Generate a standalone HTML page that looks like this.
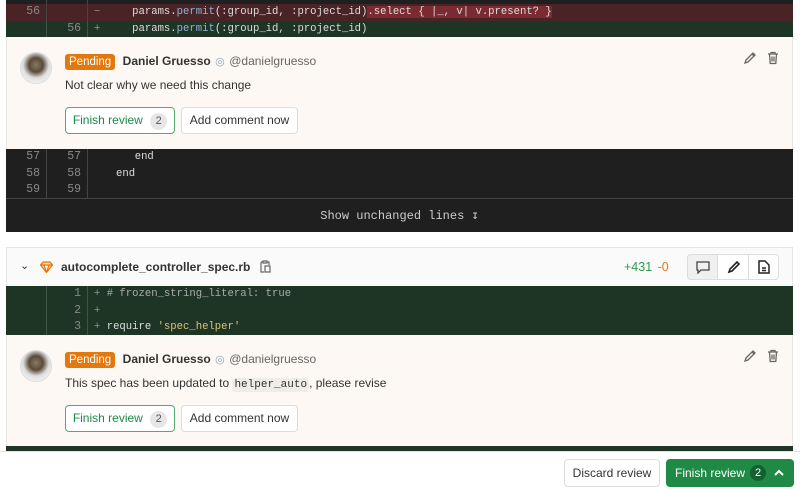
<!DOCTYPE html>
<html><head><meta charset="utf-8"><style>
*{box-sizing:border-box;margin:0;padding:0}
body{width:800px;height:490px;overflow:hidden;background:#fff;font-family:"Liberation Sans",sans-serif;position:relative;color:#333}
.a{position:absolute}
.mono{font-family:"Liberation Mono",monospace;font-size:10.6px}
.row{position:absolute;left:6px;width:787px;height:16.5px;line-height:16.5px}
.n1,.n2{position:absolute;top:0;height:100%;text-align:right;color:#888;border-right:1px solid #444;font-size:11.5px}
.n1{left:0;width:41px;padding-right:6px}
.n2{left:41px;width:41px;padding-right:6px}
.code{position:absolute;left:82px;top:0;color:#ddd;white-space:pre}
.dark{background:#1f1f1f}
.red{background:#4a2327}
.grn{background:#1e3525}
.grn .n1,.grn .n2{border-color:#3d5545}
.cmt{background:#fdf8f3;border-left:1px solid #e5e5e5;border-right:1px solid #e5e5e5}
.av{width:32px;height:32px;border-radius:50%;background:radial-gradient(circle at 50% 40%,#8a7a60 0,#5a4a3a 30%,#ddd 55%,#f4f4f4 80%);border:1px solid #ddd}
.pend{display:inline-block;background:#e3780f;color:#fff;font-size:11.5px;padding:2px 4px;border-radius:3px}
.name{font-weight:bold;font-size:12px;color:#333}
.user{font-size:12px;color:#666}
.txt{font-size:12px;color:#333}
.btn{position:absolute;height:27px;border:1px solid #ddd;border-radius:4px;background:#fff;font-size:12px;line-height:25px;color:#333;text-align:center}
.btng{border-color:#54ab72;color:#1a8a45}
.badge{display:inline-block;background:#e6e6e6;color:#555;border-radius:9px;font-size:11px;width:17px;height:17px;line-height:17px;text-align:center;margin-left:4px}
</style></head><body>

<div class="row dark mono" style="top:0;height:4px"><div class="n1"></div><div class="n2"></div></div>
<div class="row red mono" style="top:4px"><div class="n1">56</div><div class="n2"></div><div class="code" style="left:88px"><span style="color:#aa8888">−</span>     params.<span style="color:#8fb3d9">permit</span>(:group_id, :project_id)<span style="background:#7a2a30">.select { |_, v| v.present? }</span></div></div>
<div class="row grn mono" style="top:20.5px"><div class="n1"></div><div class="n2">56</div><div class="code" style="left:88px"><span style="color:#889988">+</span>     params.<span style="color:#8fb3d9">permit</span>(:group_id, :project_id)</div></div>

<div class="a cmt" style="left:6px;top:37px;width:787px;height:112px"></div>
<div class="a av" style="left:20px;top:52px"></div>
<div class="a" style="left:65px;top:52px;white-space:nowrap"><span class="pend">Pending</span> <span class="name" style="margin-left:3px">Daniel Gruesso</span> <span style="color:#8aa3c0;font-size:11px">◎</span> <span class="user">@danielgruesso</span></div>
<div class="a txt" style="left:65px;top:78px">Not clear why we need this change</div>
<div class="btn btng" style="left:65px;top:107px;width:110px">Finish review <span class="badge">2</span></div>
<div class="btn" style="left:181px;top:107px;width:117px">Add comment now</div>
<svg class="a" style="left:743px;top:51px" width="14" height="14" viewBox="0 0 14 14"><path d="M2 12l1-3 7-7 2 2-7 7z M9 3l2 2" fill="none" stroke="#666" stroke-width="1.3"/></svg>
<svg class="a" style="left:766px;top:51px" width="14" height="14" viewBox="0 0 14 14"><path d="M2 3h10M5 3V1.5h4V3M3.5 3l.7 9.5h5.6l.7-9.5M6 5.5v5M8 5.5v5" fill="none" stroke="#666" stroke-width="1.3"/></svg>

<div class="row dark mono" style="top:149px"><div class="n1">57</div><div class="n2">57</div><div class="code" style="left:116px">  end</div></div>
<div class="row dark mono" style="top:165.5px"><div class="n1">58</div><div class="n2">58</div><div class="code" style="left:110px">end</div></div>
<div class="row dark mono" style="top:182px"><div class="n1">59</div><div class="n2">59</div></div>
<div class="a dark mono" style="left:6px;top:198px;width:787px;height:34px;border-top:1px solid #444;text-align:center;line-height:34px;color:#ccc;font-size:12px">Show unchanged lines  ↧</div>

<div class="a" style="left:6px;top:247px;width:787px;height:39px;background:#fafafa;border:1px solid #e5e5e5;border-bottom:none"></div>
<div class="a" style="left:20px;top:259px;font-size:11px;color:#333">⌄</div>
<svg class="a" style="left:40px;top:261px" width="13" height="12" viewBox="0 0 13 12"><path d="M3 1h7l2.5 3L6.5 11.5 .5 4z M.5 4h12 M4 4l2.5 7.5L9 4" fill="#fbd9a8" stroke="#e3780f" stroke-width="1.2"/></svg>
<div class="a name" style="left:61px;top:260px">autocomplete_controller_spec.rb</div>
<svg class="a" style="left:259px;top:260px" width="12" height="13" viewBox="0 0 12 13"><path d="M2 2h2M8 2h2v3M2 2v10h3M4 1h4v2H4z M6 6h5v6H6z" fill="none" stroke="#666" stroke-width="1.2"/></svg>
<div class="a" style="left:624px;top:260px;font-size:12.5px"><span style="color:#2f9a55">+431</span> <span style="color:#e3780f;margin-left:2px">-0</span></div>
<div class="a" style="left:687px;top:254px;width:92px;height:26px;border:1px solid #ddd;border-radius:4px;background:#fff"></div>
<div class="a" style="left:687px;top:254px;width:31px;height:26px;background:#f0f0f0;border:1px solid #ddd;border-radius:4px 0 0 4px"></div>
<div class="a" style="left:748px;top:254px;width:1px;height:26px;background:#ddd"></div>
<svg class="a" style="left:696px;top:261px" width="14" height="13" viewBox="0 0 14 13"><path d="M1 1h12v8H5l-3 3V9H1z" fill="none" stroke="#444" stroke-width="1.3"/></svg>
<svg class="a" style="left:727px;top:260px" width="14" height="14" viewBox="0 0 14 14"><path d="M2 12l1-3 7-7 2 2-7 7z" fill="none" stroke="#222" stroke-width="1.6"/></svg>
<svg class="a" style="left:758px;top:260px" width="12" height="14" viewBox="0 0 12 14"><path d="M1 1h6l4 4v8H1z M4 8h4M4 10.5h4" fill="none" stroke="#222" stroke-width="1.5"/></svg>

<div class="row grn mono" style="top:286px"><div class="n1"></div><div class="n2">1</div><div class="code" style="left:88px"><span style="color:#889988">+</span> <span style="color:#aaa"># frozen_string_literal: true</span></div></div>
<div class="row grn mono" style="top:302.5px"><div class="n1"></div><div class="n2">2</div><div class="code" style="left:88px"><span style="color:#889988">+</span></div></div>
<div class="row grn mono" style="top:319px"><div class="n1"></div><div class="n2">3</div><div class="code" style="left:88px"><span style="color:#889988">+</span> require <span style="color:#d8c27a">'spec_helper'</span></div></div>

<div class="a cmt" style="left:6px;top:335px;width:787px;height:111px"></div>
<div class="a av" style="left:20px;top:350px"></div>
<div class="a" style="left:65px;top:350px;white-space:nowrap"><span class="pend">Pending</span> <span class="name" style="margin-left:3px">Daniel Gruesso</span> <span style="color:#8aa3c0;font-size:11px">◎</span> <span class="user">@danielgruesso</span></div>
<div class="a txt" style="left:65px;top:376px">This spec has been updated to <span class="mono" style="background:#f0ede8;padding:1px 2px;border-radius:3px;font-size:11px">helper_auto</span>, please revise</div>
<div class="btn btng" style="left:65px;top:405px;width:110px">Finish review <span class="badge">2</span></div>
<div class="btn" style="left:181px;top:405px;width:117px">Add comment now</div>
<svg class="a" style="left:743px;top:349px" width="14" height="14" viewBox="0 0 14 14"><path d="M2 12l1-3 7-7 2 2-7 7z M9 3l2 2" fill="none" stroke="#666" stroke-width="1.3"/></svg>
<svg class="a" style="left:766px;top:349px" width="14" height="14" viewBox="0 0 14 14"><path d="M2 3h10M5 3V1.5h4V3M3.5 3l.7 9.5h5.6l.7-9.5M6 5.5v5M8 5.5v5" fill="none" stroke="#666" stroke-width="1.3"/></svg>

<div class="a" style="left:6px;top:446px;width:787px;height:5px;background:#1e3525"></div>
<div class="a" style="left:0;top:451px;width:800px;height:39px;background:#fff;border-top:1px solid #e5e5e5"></div>
<div class="btn" style="left:564px;top:459px;width:96px;height:28px;line-height:26px">Discard review</div>
<div class="a" style="left:666px;top:459px;width:128px;height:28px;background:#1f8a45;border-radius:4px;color:#fff;font-size:12px;line-height:28px;padding-left:9px">Finish review</div>
<div class="a" style="left:750px;top:465px;width:16px;height:16px;border-radius:8px;background:#15602f;color:#fff;font-size:11px;line-height:16px;text-align:center">2</div>
<svg class="a" style="left:773px;top:468px" width="12" height="10" viewBox="0 0 12 10"><path d="M2 7l4-4 4 4" fill="none" stroke="#fff" stroke-width="2"/></svg>
</body></html>
